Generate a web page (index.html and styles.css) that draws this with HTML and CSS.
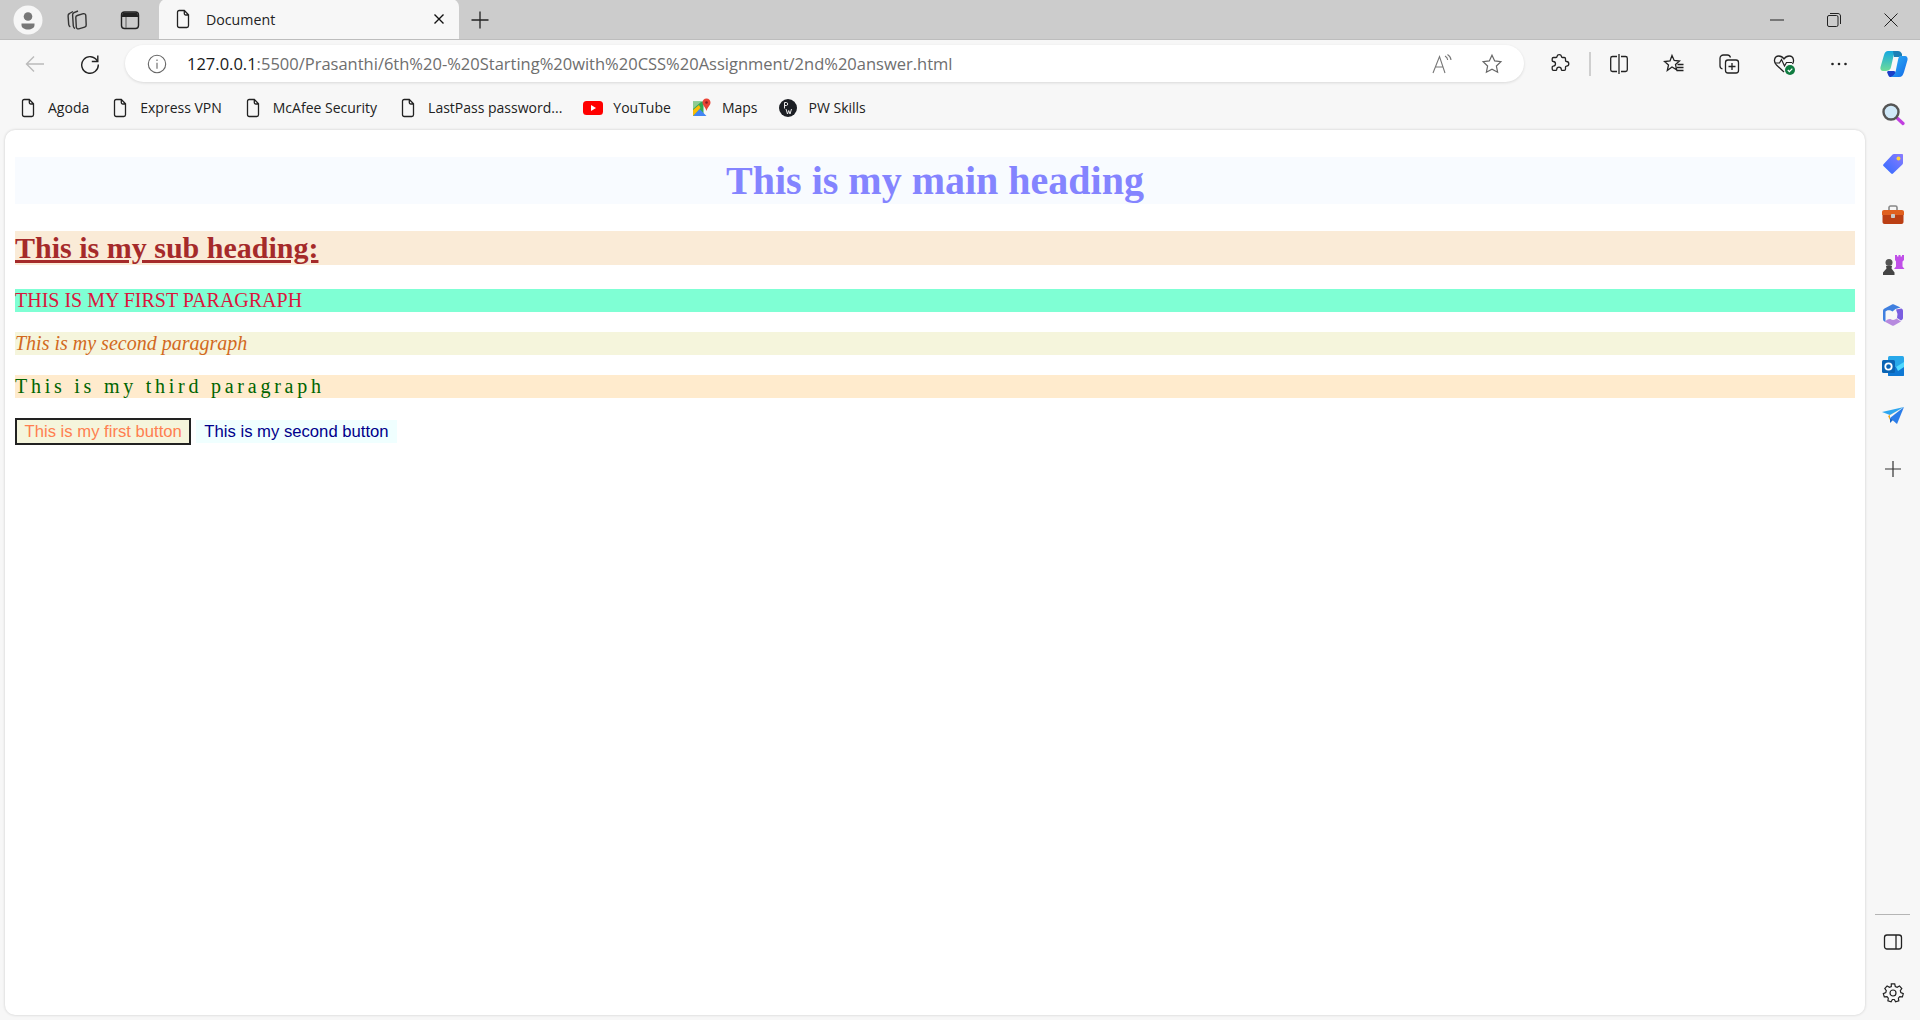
FILE: index.html
```html
<!DOCTYPE html>
<html lang="en">
<head>
    <meta charset="UTF-8"/>
    <title>Document</title>
    <link rel="stylesheet" href="styles.css">
</head>
<body>
<svg class="defs" width="0" height="0">
    <symbol id="doc" viewBox="0 0 20 20">
        <path d="M4.500 3.200c0-.9.700-1.700 1.700-1.700h5.100l4.200 4.300v11c0 .9-.7 1.700-1.700 1.700H6.200c-1 0-1.700-.8-1.700-1.700z M11.300 1.500v3c0 .9.600 1.500 1.500 1.500h2.700" fill="none" stroke="#222" stroke-width="1.300"/>
    </symbol>
</svg>
<div class="browser">
    <header class="tabstrip">
        <div class="avatar">
            <svg width="30" height="30" viewBox="0 0 30 30"><circle cx="15" cy="15" r="14.500" fill="#f6f6f6"/><circle cx="15" cy="11.500" r="4.300" fill="#777"/><path d="M8.500 18.500h13v1.500c0 2.800-2.900 4.500-6.500 4.500s-6.500-1.700-6.500-4.500z" fill="#777"/></svg>
        </div>
        <div class="strip-btn strip-btn-collections">
            <svg width="22" height="22" viewBox="0 0 22 22" fill="none" stroke="#333" stroke-width="1.400"><path d="M7 2.500 3.500 4.500C2.500 5 2 6 2.100 7l.6 8.500c.1 1 .6 1.800 1.600 2.300"/><path d="M12 2 8 3.700C7 4.200 6.500 5 6.600 6l.7 11c.1 1 .7 2 1.700 2.500"/><path d="M11.300 6.500l6-1.800c1.300-.3 2.400.5 2.500 1.800l.4 9.500c.1 1-.5 1.800-1.500 2.100l-6 1.700c-1.300.3-2.300-.5-2.400-1.800l-.5-9.500c-.1-1 .5-1.700 1.500-2z"/></svg>
        </div>
        <div class="strip-btn strip-btn-tabs">
            <svg width="20" height="20" viewBox="0 0 20 20"><rect x="1.500" y="2" width="17" height="16.500" rx="3" fill="none" stroke="#222" stroke-width="1.400"/><path d="M2 5.500c0-1.700 1.300-3 3-3h10c1.700 0 3 1.300 3 3v1.500H2z" fill="#222"/><path d="M6 7v11" stroke="#666" stroke-width="1.100"/></svg>
        </div>
        <div class="tab">
            <svg class="tab-doc" width="20" height="20"><use href="#doc"/></svg>
            <span class="tab-title">Document</span>
            <svg class="tab-close" width="12" height="12" viewBox="0 0 12 12"><path d="M1.500 1.500l9 9M10.500 1.500l-9 9" stroke="#111" stroke-width="1.400"/></svg>
        </div>
        <div class="new-tab">
            <svg width="20" height="20" viewBox="0 0 20 20"><path d="M10 1.500v17M1.500 10h17" stroke="#222" stroke-width="1.300"/></svg>
        </div>
        <div class="window-controls">
            <svg width="14" height="14" viewBox="0 0 14 14"><path d="M0 7h14" stroke="#222" stroke-width="1"/></svg>
            <svg width="14" height="14" viewBox="0 0 14 14" fill="none" stroke="#222" stroke-width="1"><rect x=".5" y="2.500" width="10.500" height="11" rx="1.500"/><path d="M3 .5h8c1.300 0 2.500 1.100 2.500 2.500v8"/></svg>
            <svg width="14" height="14" viewBox="0 0 14 14"><path d="M.5.500l13 13M13.500.500l-13 13" stroke="#222" stroke-width="1"/></svg>
        </div>
    </header>

    <div class="toolbar">
        <div class="tool-btn">
            <svg width="22" height="22" viewBox="0 0 22 22" fill="none" stroke="#bbb" stroke-width="1.400"><path d="M20 11H2.500M10 3.500 2.500 11l7.500 7.500"/></svg>
        </div>
        <div class="tool-btn">
            <svg width="22" height="22" viewBox="0 0 22 22" fill="none" stroke="#222" stroke-width="1.400"><path d="M18.300 8A8.300 8.300 0 1 0 19.300 11.500"/><path d="M18.800 2.500v6h-6"/></svg>
        </div>
        <div class="address">
            <svg class="address-info" width="20" height="20" viewBox="0 0 20 20" fill="none" stroke="#666" stroke-width="1.100"><circle cx="10" cy="10" r="8.700"/><path d="M10 8.700v6M10 5.400v1.500"/></svg>
            <span class="url"><span class="url-host">127.0.0.1</span>:5500/Prasanthi/6th%20-%20Starting%20with%20CSS%20Assignment/2nd%20answer.html</span>
            <svg class="address-read" width="22" height="22" viewBox="0 0 22 22" fill="none" stroke="#777" stroke-width="1.100"><path d="M2 20 8.500 3.500 14 20M4.500 14h8"/><path d="M14 3c1.500.8 2.500 2.300 2.700 4M16.500 1.500c2 1.200 3.300 3.200 3.500 5.500"/></svg>
            <svg class="address-star" width="22" height="22" viewBox="0 0 22 22"><path d="M11 2.200l2.700 5.700 6.200.8-4.500 4.300 1.200 6.200L11 16.200l-5.600 3 1.200-6.200-4.500-4.300 6.200-.8z" fill="none" stroke="#666" stroke-width="1.200"/></svg>
        </div>
        <div class="tool-btn tool-btn-ext">
            <svg width="22" height="22" viewBox="0 0 22 22"><path d="M9 3.500a2.300 2.300 0 0 1 4.500 0c0 .7.400 1 1 1h1.800c.8 0 1.200.5 1.200 1.200v1.800c0 .6.300 1 1 1a2.300 2.300 0 0 1 0 4.600c-.7 0-1 .4-1 1v2c0 .8-.5 1.300-1.200 1.300h-2c-.6 0-1-.4-1-1a2.300 2.300 0 0 0-4.600 0c0 .6-.4 1-1 1H5.500c-.8 0-1.300-.5-1.300-1.300v-2c0-.6.400-1 1-1a2.300 2.300 0 0 0 0-4.600c-.6 0-1-.4-1-1V5.700c0-.7.500-1.200 1.300-1.200H8c.6 0 1-.4 1-1z" fill="none" stroke="#222" stroke-width="1.300"/></svg>
        </div>
        <div class="tool-divider"></div>
        <div class="tool-btn">
            <svg width="22" height="22" viewBox="0 0 22 22" fill="none" stroke="#222" stroke-width="1.300"><path d="M9 3.500H4.500c-1 0-1.800.8-1.800 1.800v11.400c0 1 .8 1.800 1.800 1.800H9M13 3.500h4.500c1 0 1.800.8 1.800 1.800v11.400c0 1-.8 1.800-1.800 1.800H13M11 1v20"/></svg>
        </div>
        <div class="tool-btn">
            <svg width="22" height="22" viewBox="0 0 22 22" fill="none" stroke="#222" stroke-width="1.300"><path d="M9 2.500l2.200 5 5.300.5-4 3.600 1.200 5.200L9 14l-4.700 3.500 1.200-5.600-4-3.400 5.500-.5z"/><path d="M14.500 11.500h6M14 14.500h6.500M13.500 17.500h7"/></svg>
        </div>
        <div class="tool-btn">
            <svg width="22" height="22" viewBox="0 0 22 22" fill="none" stroke="#222" stroke-width="1.300"><rect x="7.500" y="7" width="13" height="13" rx="2.500"/><path d="M14 10v7M10.500 13.500h7"/><path d="M4.500 16C3 15.500 2 14.300 2 13V5.500C2 3.500 3.500 2 5.500 2h4c1.300 0 2.500.8 3 2.500"/></svg>
        </div>
        <div class="tool-btn">
            <svg width="24" height="24" viewBox="0 0 24 24"><path d="M12 20 4.500 13C2.800 11.300 2.300 9.800 2.500 8c.3-2.300 2-4 4.300-4 2.200 0 3.900 1.100 5.200 3 1.300-1.900 3-3 5.200-3 2.300 0 4 1.700 4.300 4 .2 1.500-.2 2.700-1 4" fill="none" stroke="#222" stroke-width="1.300"/><path d="M3 11h4.500l2-3.500 3 6.500 2-3.500H20" fill="none" stroke="#222" stroke-width="1.200"/><circle cx="18" cy="18" r="5" fill="#107c41"/><path d="M15.800 18l1.600 1.600 2.900-3" fill="none" stroke="#fff" stroke-width="1.300"/></svg>
        </div>
        <div class="tool-btn">
            <svg width="20" height="20" viewBox="0 0 20 20" fill="#222"><circle cx="3.500" cy="10" r="1.300"/><circle cx="10" cy="10" r="1.300"/><circle cx="16.500" cy="10" r="1.300"/></svg>
        </div>
        <div class="tool-btn tool-btn-last">
            <svg width="28" height="28" viewBox="0 0 28 28">
                <defs>
                    <linearGradient id="cop-a" x1="0" y1="0" x2="1" y2="1"><stop offset="0" stop-color="#2cb4f5"/><stop offset="1" stop-color="#1468e8"/></linearGradient>
                    <linearGradient id="cop-b" x1="0" y1="0" x2="0" y2="1"><stop offset="0" stop-color="#14a8e0"/><stop offset="1" stop-color="#6fdc98"/></linearGradient>
                </defs>
                <path d="M8 1H17C15 2 14 4 13.500 6L11 17C10.500 20 8 21 5 21H3C1 21 0 19 .5 17L4 5C5 2 6 1 8 1z" fill="url(#cop-b)"/>
                <path d="M13 1H18C20 1 21 2 22 4V7H14z" fill="#1c7fb5"/>
                <path d="M8 21H14L16 22C15 25 13 27 11 27H10C9 27 8 25 7 22z" fill="#1a3fc8"/>
                <path d="M20 6H25C27 6 28 8 27.500 10L24 22C23 25 22 27 19 27H11C13 26 15 24 15.500 22L18 10C18.500 8 19 6 20 6z" fill="url(#cop-a)"/>
            </svg>
        </div>
    </div>

    <div class="workspace">
        <div class="content">
            <nav class="bookmarks">
                <div class="bookmark"><svg width="20" height="20"><use href="#doc"/></svg><span>Agoda</span></div>
                <div class="bookmark"><svg width="20" height="20"><use href="#doc"/></svg><span>Express VPN</span></div>
                <div class="bookmark"><svg width="20" height="20"><use href="#doc"/></svg><span>McAfee Security</span></div>
                <div class="bookmark"><svg width="20" height="20"><use href="#doc"/></svg><span>LastPass password...</span></div>
                <div class="bookmark">
                    <svg width="20" height="20" viewBox="0 0 20 20"><rect y="3" width="20" height="14" rx="3.500" fill="#f00"/><path d="M8 7v6l5-3z" fill="#fff"/></svg>
                    <span>YouTube</span>
                </div>
                <div class="bookmark">
                    <svg width="20" height="20" viewBox="0 0 20 20"><path d="M1 3.500h10.500V18H1z" fill="#34a853"/><path d="M1 18l6.500-7 7 7z" fill="#4285f4"/><path d="M1 12l6-5 1.500 3L1 18z" fill="#fbbc04"/><path d="M1 3.500h8.500L1 11z" fill="#8ecb92"/><path d="M14.500 .5C12 .5 10.500 2.500 10.500 4.500c0 2.700 2.800 4.500 4 8.500 1.200-4 4-5.800 4-8.500 0-2-1.500-4-4-4z" fill="#ea4335"/><circle cx="14.500" cy="4.500" r="1.300" fill="#8a1f1f"/></svg>
                    <span>Maps</span>
                </div>
                <div class="bookmark">
                    <svg width="20" height="20" viewBox="0 0 20 20"><circle cx="10" cy="10" r="9" fill="#1c1f24"/><path d="M6.500 4.500v6M6.500 4.500h2c1.600 0 1.600 3 0 3h-2M8 11l1.500 5 1.200-3.500 1.300 3.500 1.500-5" fill="none" stroke="#e8e8e8" stroke-width="1"/></svg>
                    <span>PW Skills</span>
                </div>
            </nav>
            <main class="page">
                <h1 class="main-heading">This is my main heading</h1>
                <h2 class="sub-heading">This is my sub heading:</h2>
                <p class="para para-first">This is my first paragraph</p>
                <p class="para para-second">This is my second paragraph</p>
                <p class="para para-third">This is my third paragraph</p>
                <div class="button-row">
                    <button class="btn btn-first">This is my first button</button>
                    <button class="btn btn-second">This is my second button</button>
                </div>
            </main>
        </div>

        <aside class="sidebar">
            <div class="side-btn">
                <svg width="24" height="24" viewBox="0 0 24 24"><path d="M15 15l7 6.500" stroke="#c13fe0" stroke-width="3.200" stroke-linecap="round"/><circle cx="10" cy="10" r="7.500" fill="#cfe8f8" stroke="#555" stroke-width="2.400"/></svg>
            </div>
            <div class="side-btn">
                <svg width="24" height="24" viewBox="0 0 24 24"><defs><linearGradient id="tag-g" x1="0" y1="1" x2="1" y2="0"><stop offset="0" stop-color="#2f6bff"/><stop offset="1" stop-color="#8a7cff"/></linearGradient></defs><path d="M13 2h8c.6 0 1 .4 1 1v8c0 .6-.2 1-.6 1.400L12 21.500c-.5.500-1.300.500-1.800 0L2.500 14c-.5-.5-.5-1.300 0-1.800L11.600 2.600C12 2.200 12.400 2 13 2z" fill="url(#tag-g)"/><circle cx="17.500" cy="6.500" r="2" fill="#ffd23f"/></svg>
            </div>
            <div class="side-btn">
                <svg width="24" height="24" viewBox="0 0 24 24"><path d="M8 7V4.500C8 3.700 8.700 3 9.500 3h5c.8 0 1.500.7 1.500 1.500V7" fill="none" stroke="#888" stroke-width="1.600"/><path d="M1 9c0-1.100.9-2 2-2h18c1.100 0 2 .9 2 2v3H1z" fill="#e0601f"/><path d="M1.500 12h21v7c0 1.100-.9 2-2 2h-17c-1.100 0-2-.9-2-2z" fill="#bb3f14"/><rect x="10" y="11" width="4" height="4" rx=".8" fill="#c9c9c9"/></svg>
            </div>
            <div class="side-btn">
                <svg width="24" height="24" viewBox="0 0 24 24"><path d="M14 2h2v1.500h1.500V2h2v1.500H21V2h2v5l-1.500 1.500v5l2 2.500H13l2-2.500v-5L14 7z" fill="#c04fe8"/><circle cx="8" cy="9.500" r="3.500" fill="#555"/><path d="M5 13h6l-.5 2.500 3 4V22H2v-2.500l3.500-4z" fill="#444"/></svg>
            </div>
            <div class="side-btn">
                <svg width="24" height="24" viewBox="0 0 24 24"><path d="M11 1.500 3.500 5.500C2.500 6 2 7 2 8v8c0 1 .5 2 1.500 2.500l1 .6V8.500c2-2 5-1.500 7 0l3-2.500 5-1.500L13 1.500c-.6-.3-1.400-.3-2 0z" fill="#3f7fdf"/><path d="M20.500 5.500 15 6.500 16.500 11 16 15l4 2.500c1-.5 2-1.500 2-2.500V8c0-1-.5-2-1.500-2.500z" fill="#7b5ee0"/><path d="M4 18.800 11 22.500c.6.300 1.400.3 2 0l7-4-4.500-3c-1.500 1.500-4 2-6 .5-1.500-.5-4.500 1-5.500 2.800z" fill="#b78adf"/></svg>
            </div>
            <div class="side-btn">
                <svg width="24" height="24" viewBox="0 0 24 24"><rect x="7" y="2" width="16" height="20" rx="1.500" fill="#28a8ea"/><path d="M7 13h16v8c0 .6-.4 1-1 1H8c-.6 0-1-.4-1-1z" fill="#0f78d4"/><path d="M15 13l8-5v5l-6 4z" fill="#50d9ff"/><rect x="1" y="6" width="13" height="13" rx="1.500" fill="#0a64b4"/><circle cx="7.500" cy="12.500" r="3.200" fill="none" stroke="#fff" stroke-width="1.800"/></svg>
            </div>
            <div class="side-btn">
                <svg width="24" height="24" viewBox="0 0 24 24"><path d="M1 8 23 3 9 11z" fill="#2ea6f0"/><path d="M23 3 16 20 9 14z" fill="#2b7de9"/><path d="M23 3 9 11v5l-2-4z" fill="#f0a81e"/><path d="M9 14v5l3-3z" fill="#1765c8"/></svg>
            </div>
            <div class="side-btn side-btn-add">
                <svg width="18" height="18" viewBox="0 0 18 18"><path d="M9 1v16M1 9h16" stroke="#333" stroke-width="1.200"/></svg>
            </div>
            <div class="sidebar-bottom">
                <div class="side-line"></div>
                <div class="side-btn side-btn-small">
                    <svg width="20" height="20" viewBox="0 0 20 20" fill="none" stroke="#222" stroke-width="1.300"><rect x="1.500" y="3" width="17" height="14" rx="2.500"/><path d="M13 3v14"/></svg>
                </div>
                <div class="side-btn side-btn-small">
                    <svg width="22" height="22" viewBox="0 0 22 22" fill="none" stroke="#222" stroke-width="1.200"><circle cx="11" cy="11" r="3"/><path d="M9.300 1.800h3.400l.6 2.700 1.800.8 2.400-1.400 2.300 2.600-1.500 2.200.5 1.900 2.500 1-.9 3.300-2.700-.2-1.300 1.500.4 2.700-3.200 1-1.300-2.400h-1.900l-1.300 2.400-3.200-1 .4-2.700-1.300-1.500-2.700.2-1-3.300 2.500-1 .5-1.900-1.500-2.200 2.300-2.600 2.400 1.400 1.800-.8z"/></svg>
                </div>
            </div>
        </aside>
    </div>
</div>
</body>
</html>
```

FILE: styles.css
```css
* {
    box-sizing: border-box;
}

body {
    margin: 0;
    height: 1020px;
    overflow: hidden;
    background-color: #f7f7f7;
    font-family: "Open Sans", "Noto Sans", sans-serif;
}

svg {
    display: block;
    flex-shrink: 0;
}

.defs {
    position: absolute;
}

.browser {
    display: flex;
    flex-direction: column;
    height: 1020px;
}

/* tab strip */
.tabstrip {
    display: flex;
    align-items: center;
    height: 40px;
    background-color: #cccccc;
    border-bottom: 1px solid #bdbdbd;
}

.avatar {
    margin-left: 13px;
}

.strip-btn {
    display: flex;
    justify-content: center;
    align-items: center;
    width: 36px;
    height: 36px;
}

.strip-btn-collections {
    margin-left: 16px;
}

.strip-btn-tabs {
    margin-left: 17px;
}

.tab {
    display: flex;
    align-items: center;
    align-self: flex-end;
    width: 300px;
    height: 40px;
    margin-left: 11px;
    padding: 0 14px;
    background-color: #f7f7f7;
    border-radius: 8px 8px 0 0;
}

.tab-title {
    flex: 1;
    margin-left: 13px;
    font-size: 14.200px;
    color: #222;
}

.new-tab {
    margin-left: 11px;
}

.window-controls {
    display: flex;
    gap: 43px;
    margin-left: auto;
    margin-right: 22px;
}

/* toolbar */
.toolbar {
    display: flex;
    align-items: center;
    height: 47px;
    padding-left: 17px;
}

.tool-btn {
    display: flex;
    flex-shrink: 0;
    justify-content: center;
    align-items: center;
    width: 36px;
    height: 36px;
    margin-right: 19px;
}

.tool-btn-last {
    margin-right: 0;
}

.address {
    display: flex;
    flex-shrink: 0;
    align-items: center;
    width: 1399px;
    height: 37px;
    margin-left: -2px;
    margin-right: 17px;
    padding: 0 21px 0 22px;
    background-color: #fff;
    border-radius: 19px;
    box-shadow: 0 1px 3px rgba(0, 0, 0, 0.12);
}

.url {
    flex: 1;
    margin-left: 20px;
    font-size: 16.500px;
    color: #6e6e6e;
    white-space: nowrap;
}

.url-host {
    color: #1a1a1a;
}

.address-star {
    margin-left: 28px;
}

.tool-btn-ext {
    margin-right: 12px;
}

.tool-divider {
    flex-shrink: 0;
    width: 2px;
    height: 24px;
    margin-right: 10px;
    background-color: #cfcfcf;
}

/* bookmarks and page */
.workspace {
    display: flex;
    flex: 1;
    min-height: 0;
}

.content {
    display: flex;
    flex-direction: column;
    width: 1865px;
}

.bookmarks {
    display: flex;
    align-items: center;
    gap: 21px;
    height: 43px;
    padding: 0 0 2px 18px;
}

.bookmark {
    display: flex;
    align-items: center;
    gap: 10px;
    font-size: 14px;
    color: #222;
}

.page {
    flex: 1;
    margin: 0 0 5px 5px;
    padding: 0 10px;
    overflow: hidden;
    background-color: #fff;
    border-radius: 10px;
    box-shadow: 0 0 3px rgba(0, 0, 0, 0.18);
    font-family: "Liberation Serif", serif;
}

.main-heading {
    margin: 27px 0;
    font-size: 40px;
    text-align: center;
    color: #8484ff;
    background-color: #f8fbff;
}

.sub-heading {
    margin: 27px 0 24px;
    font-size: 30px;
    text-decoration: underline;
    color: #a52a2a;
    background-color: #faebd7;
}

.para {
    margin: 20px 0;
    font-size: 20px;
}

.para-first {
    text-transform: uppercase;
    color: #dc143c;
    background-color: #7fffd4;
}

.para-second {
    font-style: italic;
    color: #d2691e;
    background-color: #f5f5dc;
}

.para-third {
    letter-spacing: 3.750px;
    color: #006400;
    background-color: #ffebcd;
}

.button-row {
    display: flex;
    align-items: center;
    gap: 5px;
}

.btn {
    font-family: "Liberation Sans", sans-serif;
    font-size: 16.670px;
}

.btn-first {
    height: 27px;
    padding: 0 7.500px;
    color: #ff7f50;
    background-color: #f5f5dc;
    border: 2.500px solid #222;
}

.btn-second {
    height: 23px;
    padding: 0 8px;
    color: #00008b;
    background-color: #f0ffff;
    border: none;
}

/* right sidebar */
.sidebar {
    display: flex;
    flex-direction: column;
    align-items: center;
    width: 55px;
    padding: 2px 0 7px;
}

.side-btn {
    display: flex;
    justify-content: center;
    align-items: center;
    width: 36px;
    height: 50.300px;
}

.side-btn-add {
    margin-top: 3px;
}

.sidebar-bottom {
    display: flex;
    flex-direction: column;
    align-items: center;
    margin-top: auto;
}

.side-line {
    width: 35px;
    height: 1px;
    margin-bottom: 7px;
    background-color: #b5b5b5;
}

.side-btn-small {
    height: 40px;
}

.side-btn-small + .side-btn-small {
    margin-top: 11px;
}
```
